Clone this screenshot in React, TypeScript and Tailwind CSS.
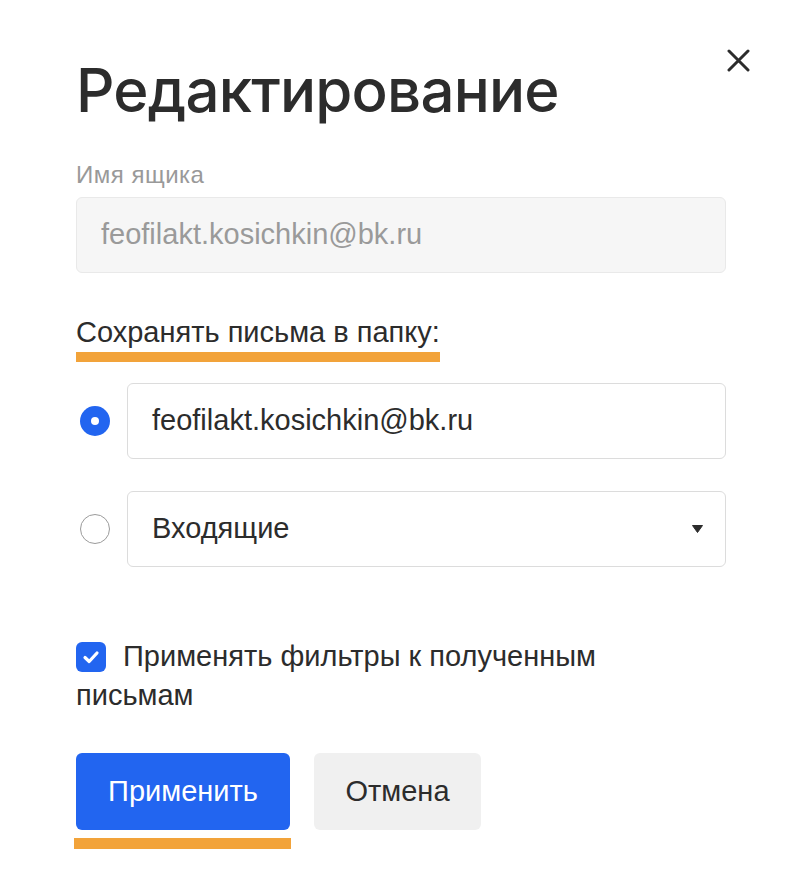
import React from "react";

const sans = "font-['Liberation_Sans','Helvetica','Arial',sans-serif]";

function Radio({ checked }: { checked?: boolean }) {
  return checked ? (
    <span className="flex h-[30px] w-[30px] shrink-0 items-center justify-center rounded-full bg-[#2265f0]">
      <span className="block h-[8px] w-[8px] rounded-full bg-white" />
    </span>
  ) : (
    <span className="block h-[30px] w-[30px] shrink-0 rounded-full border-[1.5px] border-[#9b9b9b] bg-white" />
  );
}

export default function App() {
  return (
    <main className={`relative min-h-[888px] w-full bg-white ${sans} text-[#2c2c2c]`}>
      {/* close */}
      <button className="absolute left-[727px] top-[49px] h-[23px] w-[23px]" aria-label="Закрыть">
        <svg viewBox="0 0 23 23" className="block h-[23px] w-[23px]" fill="none" stroke="#2c2c2c" strokeWidth="3" strokeLinecap="round">
          <path d="M2 2L21 21M21 2L2 21" />
        </svg>
      </button>

      <div className="w-[650px] ml-[76px] pt-[54px]">
        <h1 className="font-['Inter',sans-serif] text-[60px] font-medium leading-[72px] tracking-[-0.8px] text-[#2c2c2c]">
          Редактирование
        </h1>

        {/* ===== mailbox name ===== */}
        <div className="mt-[36px] text-[24px] leading-[26px] tracking-[0.5px] text-[#999999]">Имя ящика</div>
        <div className="mt-[9px] flex h-[76px] items-center rounded-[6px] border border-[#e9e9e9] bg-[#f6f6f6] px-6 text-[29px] text-[#9a9a9a]">
          feofilakt.kosichkin@bk.ru
        </div>

        {/* ===== folder ===== */}
        <div className="mt-[41px] inline-block">
          <div className="text-[29px] leading-[36px]">Сохранять письма в папку:</div>
          <div className="mt-[2px] h-[10px] bg-[#f2a33a]" />
        </div>

        <div className="mt-[21px] flex items-center gap-[17px]">
          <div className="pl-1">
            <Radio checked />
          </div>
          <div className="flex h-[76px] flex-1 items-center rounded-[6px] border border-[#dcdcdc] bg-white px-[24px] text-[29px]">
            feofilakt.kosichkin@bk.ru
          </div>
        </div>

        <div className="mt-[32px] flex items-center gap-[17px]">
          <div className="pl-1">
            <Radio />
          </div>
          <div className="flex h-[76px] flex-1 items-center justify-between rounded-[6px] border border-[#dcdcdc] bg-white pl-[24px] pr-[22px] text-[29px]">
            <span>Входящие</span>
            <svg viewBox="0 0 11 8" className="block h-[8px] w-[11px]">
              <path d="M0.5 0.5H10.5L5.5 7.5Z" fill="#2c2c2c" stroke="#2c2c2c" strokeLinejoin="round" />
            </svg>
          </div>
        </div>

        {/* ===== filters ===== */}
        <p className="mt-[70px] w-[600px] text-[29px] leading-[39px]">
          <span className="mr-[17px] inline-block h-[30px] w-[30px] rounded-[6px] bg-[#2265f0] align-[-6px]">
            <svg viewBox="0 0 30 30" className="block h-[30px] w-[30px]" fill="none" stroke="white" strokeWidth="3.2" strokeLinecap="round" strokeLinejoin="round">
              <path d="M9 15.5L13.2 19.5L21 11" />
            </svg>
          </span>
          Применять фильтры к полученным письмам
        </p>

        {/* ===== actions ===== */}
        <div className="mt-[38px] flex gap-[23px]">
          <div>
            <button className="flex h-[77px] w-[214px] items-center justify-center rounded-[6px] bg-[#2265f0] text-[29px] text-white">
              Применить
            </button>
            <div className="mt-[8px] -ml-[2px] h-[11px] w-[217px] bg-[#f2a33a]" />
          </div>
          <button className="flex h-[77px] w-[167px] items-center justify-center rounded-[6px] bg-[#f0f0f0] text-[29px] text-[#2c2c2c]">
            Отмена
          </button>
        </div>
      </div>
    </main>
  );
}
